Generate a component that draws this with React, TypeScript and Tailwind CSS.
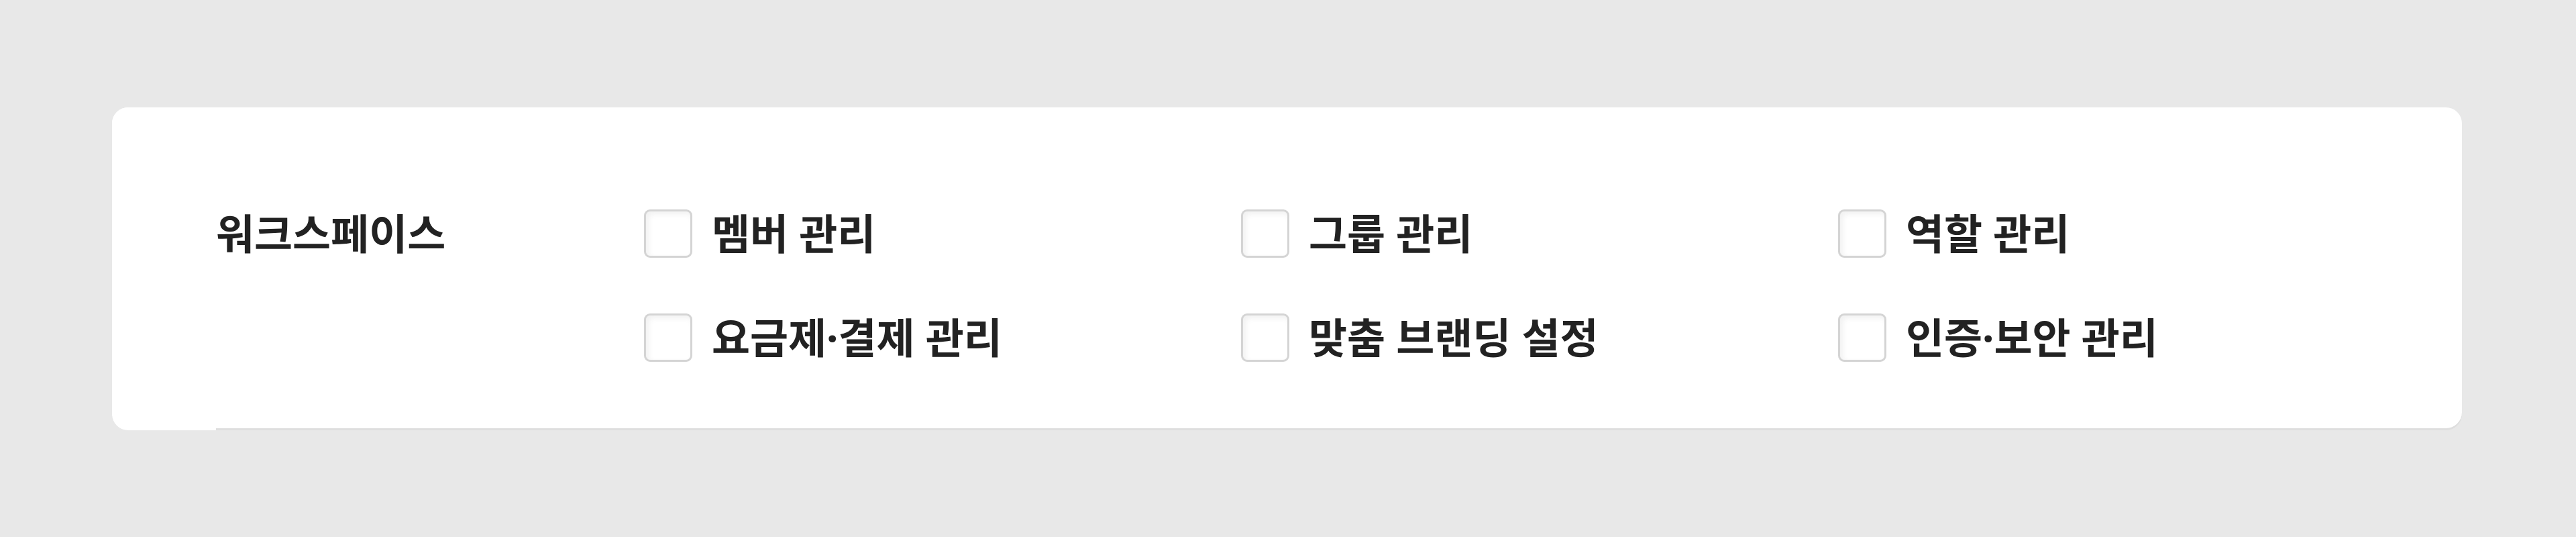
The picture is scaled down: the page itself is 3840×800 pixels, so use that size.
const permissions = [
  "멤버 관리",
  "그룹 관리",
  "역할 관리",
  "요금제·결제 관리",
  "맞춤 브랜딩 설정",
  "인증·보안 관리",
];

const Checkbox = () => (
  <span className="block w-[72px] h-[72px] shrink-0 rounded-[9px] border-[3px] border-[#d4d4d4] bg-white shadow-[inset_4px_4px_8px_rgba(0,0,0,0.06)]" />
);

const App = () => {
  return (
    <div
      className="min-h-[800px] bg-[#e8e8e8] pt-[160px] pl-[167px]"
      style={{ fontFamily: '"Noto Sans", "Noto Sans CJK KR", sans-serif' }}
    >
      <div className="flex w-[3503px] h-[478px] rounded-[24px] bg-white shadow-[0_3px_0_0_#dedede]">
        <div className="w-[155px] shrink-0 -mb-[3px] rounded-l-[24px] bg-white" />
        <div className="flex pt-[152px]">
          <div className="w-[638px] h-[72px] flex items-center text-[62px] font-bold leading-none text-[#222]">
            워크스페이스
          </div>
          <div className="grid grid-cols-[repeat(3,890px)] gap-y-[83px] self-start">
            {permissions.map((p) => (
              <label key={p} className="flex items-center gap-[29px]">
                <Checkbox />
                <span className="text-[62px] font-bold leading-none text-[#222]">
                  {p}
                </span>
              </label>
            ))}
          </div>
        </div>
      </div>
    </div>
  );
};

export default App;
